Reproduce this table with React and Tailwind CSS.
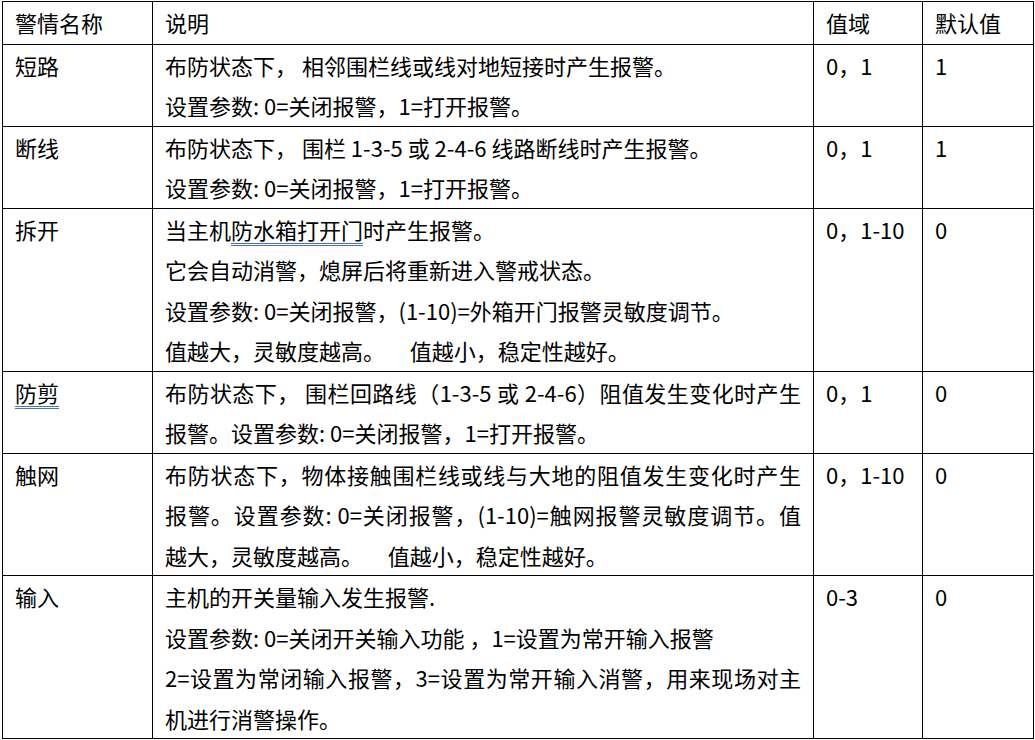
const gap = '     ';

const rows = [
  {
    name: '短路',
    lines: [
      { t: '布防状态下， 相邻围栏线或线对地短接时产生报警。' },
      { t: '设置参数: 0=关闭报警，1=打开报警。' },
    ],
    range: '0，1',
    def: '1',
  },
  {
    name: '断线',
    lines: [
      { t: '布防状态下， 围栏 1-3-5 或 2-4-6 线路断线时产生报警。' },
      { t: '设置参数: 0=关闭报警，1=打开报警。' },
    ],
    range: '0，1',
    def: '1',
  },
  {
    name: '拆开',
    lines: [
      { t: 'door' },
      { t: '它会自动消警，熄屏后将重新进入警戒状态。' },
      { t: '设置参数: 0=关闭报警，(1-10)=外箱开门报警灵敏度调节。' },
      { t: '值越大，灵敏度越高。' + gap + '值越小，稳定性越好。' },
    ],
    range: '0，1-10',
    def: '0',
  },
  {
    name: '防剪',
    mark: true,
    lines: [
      { t: '布防状态下， 围栏回路线（1-3-5 或 2-4-6）阻值发生变化时产生', j: true },
      { t: '报警。设置参数: 0=关闭报警，1=打开报警。' },
    ],
    range: '0，1',
    def: '0',
  },
  {
    name: '触网',
    lines: [
      { t: '布防状态下，物体接触围栏线或线与大地的阻值发生变化时产生', j: true },
      { t: '报警。设置参数: 0=关闭报警，(1-10)=触网报警灵敏度调节。值', j: true },
      { t: '越大，灵敏度越高。' + gap + '值越小，稳定性越好。' },
    ],
    range: '0，1-10',
    def: '0',
  },
  {
    name: '输入',
    lines: [
      { t: '主机的开关量输入发生报警.' },
      { t: '设置参数: 0=关闭开关输入功能 ，1=设置为常开输入报警' },
      { t: '2=设置为常闭输入报警，3=设置为常开输入消警，用来现场对主', j: true },
      { t: '机进行消警操作。' },
    ],
    range: '0-3',
    def: '0',
  },
];

// word's blue double underline
const mark = 'underline decoration-double decoration-[#4472c4] underline-offset-[4px] decoration-1';

function Line({ line }) {
  if (line.t === 'door') {
    return (
      <div className="leading-[40.5px]">
        当主机<span className={mark}>防水箱打开门</span>时产生报警。
      </div>
    );
  }
  return (
    <div
      className={
        line.j
          ? 'leading-[40.5px] whitespace-pre text-justify [text-align-last:justify]'
          : 'leading-[40.5px] whitespace-pre'
      }
    >
      {line.t}
    </div>
  );
}

export default function App() {
  return (
    <div className="bg-white min-h-[740px] pt-[1px] pl-[2px] text-black text-[22px] font-['Noto_Sans_CJK_SC','Noto_Sans',sans-serif]">
      <table className="table-fixed border-collapse w-[1031px]">
        <colgroup>
          <col className="w-[150px]" />
          <col className="w-[661px]" />
          <col className="w-[109px]" />
          <col className="w-[111px]" />
        </colgroup>
        <thead>
          <tr>
            <th className="border border-black font-normal text-left align-top px-[12px] pb-[1px] leading-[40.5px]">警情名称</th>
            <th className="border border-black font-normal text-left align-top px-[12px] pb-[1px] leading-[40.5px]">说明</th>
            <th className="border border-black font-normal text-left align-top px-[12px] pb-[1px] leading-[40.5px]">值域</th>
            <th className="border border-black font-normal text-left align-top px-[12px] pb-[1px] leading-[40.5px]">默认值</th>
          </tr>
        </thead>
        <tbody>
          {rows.map((r) => (
            <tr key={r.name}>
              <td className="border border-black align-top px-[12px] leading-[40.5px]">
                {r.mark ? <span className={mark}>{r.name}</span> : r.name}
              </td>
              <td className="border border-black align-top px-[12px]">
                {r.lines.map((l, i) => (
                  <Line key={i} line={l} />
                ))}
              </td>
              <td className="border border-black align-top px-[12px] leading-[40.5px]">{r.range}</td>
              <td className="border border-black align-top px-[12px] leading-[40.5px]">{r.def}</td>
            </tr>
          ))}
        </tbody>
      </table>
    </div>
  );
}
